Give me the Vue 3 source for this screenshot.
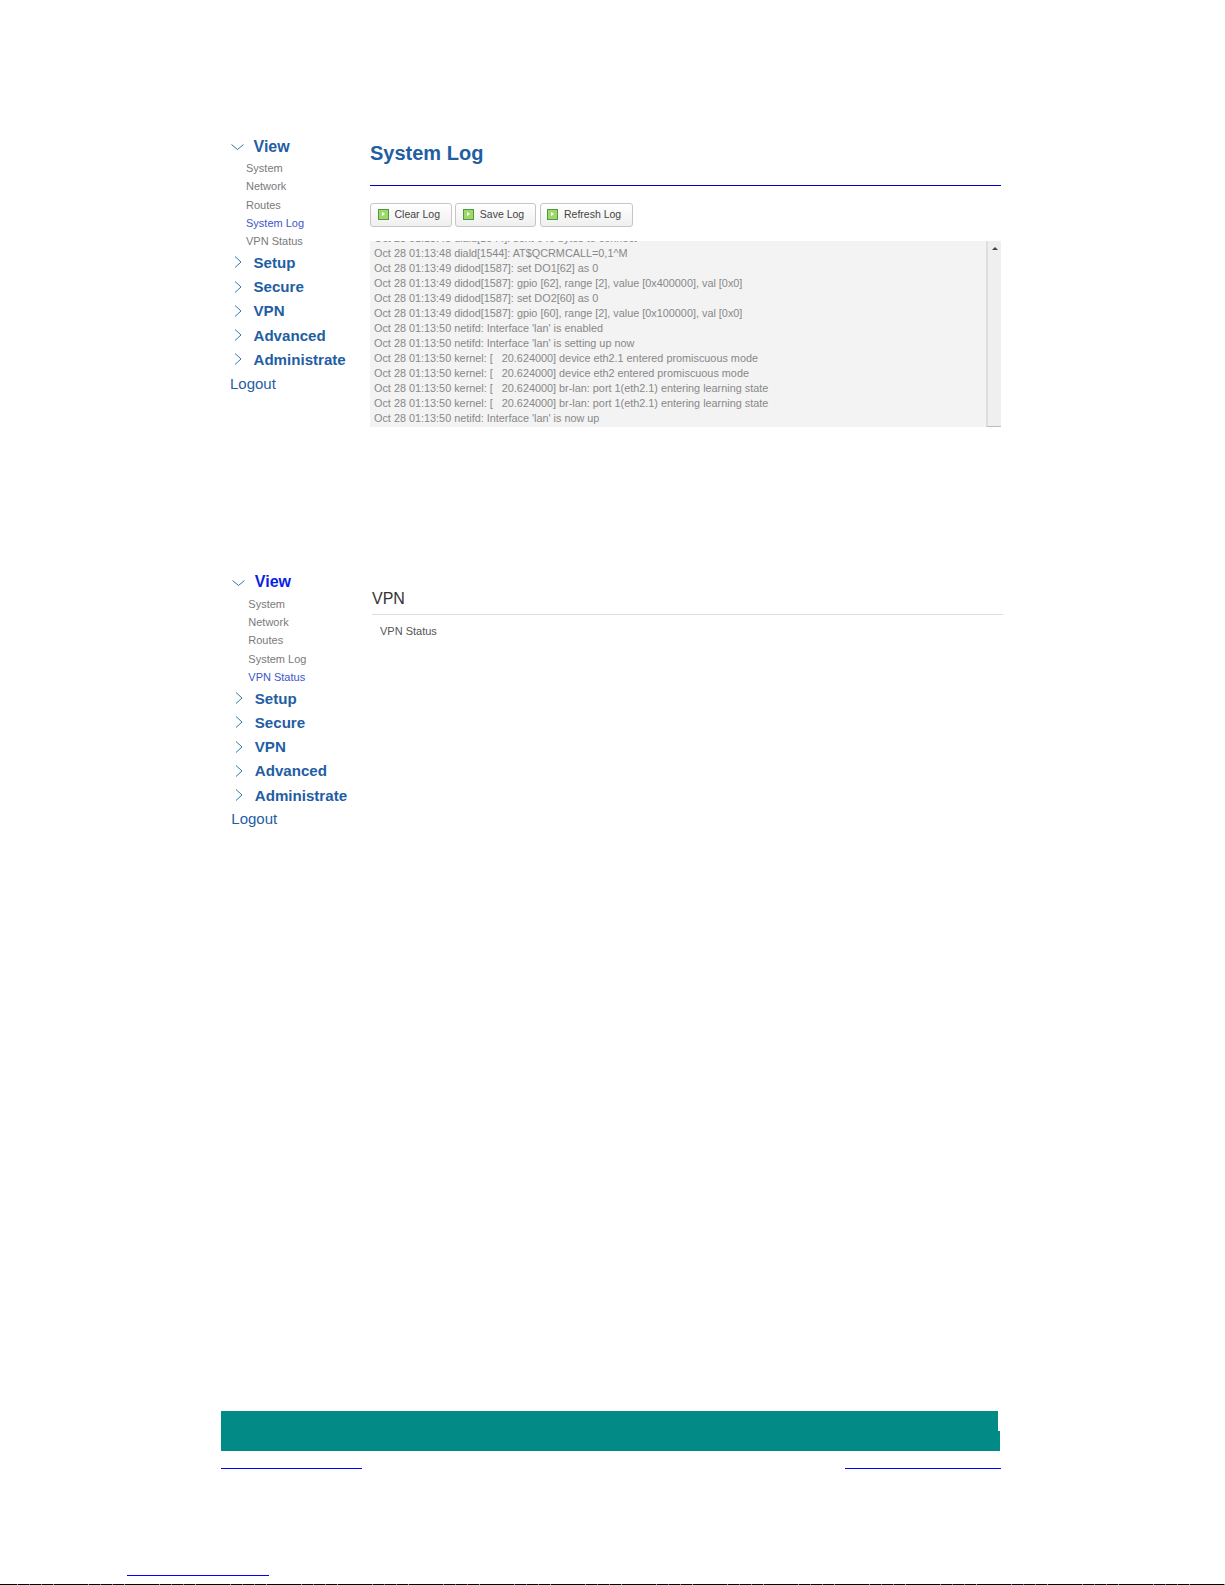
<script setup>
const items = ['System', 'Network', 'Routes', 'System Log', 'VPN Status']
const groups = ['Setup', 'Secure', 'VPN', 'Advanced', 'Administrate']
const buttons = ['Clear Log', 'Save Log', 'Refresh Log']
const logLines = [
  "Oct 28 01:13:48 diald[1544]: sent 646 bytes to connect",
  "Oct 28 01:13:48 diald[1544]: AT$QCRMCALL=0,1^M",
  "Oct 28 01:13:49 didod[1587]: set DO1[62] as 0",
  "Oct 28 01:13:49 didod[1587]: gpio [62], range [2], value [0x400000], val [0x0]",
  "Oct 28 01:13:49 didod[1587]: set DO2[60] as 0",
  "Oct 28 01:13:49 didod[1587]: gpio [60], range [2], value [0x100000], val [0x0]",
  "Oct 28 01:13:50 netifd: Interface 'lan' is enabled",
  "Oct 28 01:13:50 netifd: Interface 'lan' is setting up now",
  "Oct 28 01:13:50 kernel: [   20.624000] device eth2.1 entered promiscuous mode",
  "Oct 28 01:13:50 kernel: [   20.624000] device eth2 entered promiscuous mode",
  "Oct 28 01:13:50 kernel: [   20.624000] br-lan: port 1(eth2.1) entering learning state",
  "Oct 28 01:13:50 kernel: [   20.624000] br-lan: port 1(eth2.1) entering learning state",
  "Oct 28 01:13:50 netifd: Interface 'lan' is now up"
]
const screens = [
  { key: 'log', active: 'System Log', bright: false },
  { key: 'vpn', active: 'VPN Status', bright: true }
]
</script>

<template>
  <div class="page">
    <section v-for="s in screens" :key="s.key" class="screen" :class="'screen-' + s.key">
      <nav class="side">
        <div class="head">
          <svg class="chev" width="16" height="10" viewBox="0 0 16 10"><path d="M1.5 2.5 L7.5 7.5 L13.5 2.5" /></svg>
          <span class="head-label head-view" :class="{ bright: s.bright }">View</span>
        </div>
        <a v-for="i in items" :key="i" class="sub" :class="{ on: i === s.active }">{{ i }}</a>
        <div v-for="g in groups" :key="g" class="head">
          <svg class="chev" width="16" height="14" viewBox="0 0 16 14"><path d="M5 1.5 L11 7 L5 12.5" /></svg>
          <span class="head-label">{{ g }}</span>
        </div>
        <a class="logout">Logout</a>
      </nav>

      <main v-if="s.key === 'log'" class="main">
        <h1 class="title">System Log</h1>
        <div class="btns">
          <button v-for="b in buttons" :key="b" class="btn" type="button">
            <span class="ico"><span class="ico-arrow"></span></span>{{ b }}
          </button>
        </div>
        <div class="log">
          <div class="log-text">
            <div v-for="(l, n) in logLines" :key="n" class="log-line">{{ l }}</div>
          </div>
          <div class="scroll"><span class="scroll-up"></span></div>
        </div>
      </main>

      <main v-else class="main">
        <h2 class="vpn-title">VPN</h2>
        <p class="vpn-status">VPN Status</p>
      </main>
    </section>

    <div class="band">
      <div class="band-top"></div>
      <div class="band-bottom"></div>
    </div>
    <div class="links">
      <span class="link link-left"></span>
      <span class="link link-right"></span>
    </div>
    <div class="foot-link"></div>
    <div class="noise"></div>
  </div>
</template>

<style scoped>
.page {
  width: 1225px;
  height: 1585px;
  overflow: hidden;
  background: #fff;
  font-family: "Liberation Sans", Arial, sans-serif;
}
.screen { display: flex; box-sizing: border-box; }
.screen-log { padding: 135px 0 0 230px; height: 431px; }
.screen-vpn { padding: 139.7px 0 0 231.3px; height: 400px; }
.side { width: 140px; flex: none; display: flex; flex-direction: column; }
.screen-vpn .side { width: 140.7px; }
.screen-vpn .sub { padding-left: 17px; }
.head { display: flex; align-items: center; height: 24.27px; flex: none; }
.chev { width: 16px; flex: none; margin-right: 7.5px; overflow: visible; }
.chev path { fill: none; stroke: #2a7aa8; stroke-width: 1; }
.head-label { font-size: 15.1px; font-weight: bold; color: #1f5ea3; white-space: nowrap; }
.head-view { font-size: 16px; padding-bottom: 1px; }
.head-label.bright { color: #0a1fe8; }
.sub {
  display: block;
  height: 18.2px;
  line-height: 18.2px;
  flex: none;
  padding-left: 16px;
  font-size: 11px;
  color: #7a7a7a;
}
.sub.on { color: #3d55c8; }
.logout { font-size: 15px; line-height: 24.27px; color: #1f5ea3; }

.main { width: 631px; flex: none; }
.title {
  margin: 0;
  height: 50px;
  box-sizing: content-box;
  border-bottom: 1px solid #0000c8;
  font-size: 20px;
  line-height: 36px;
  font-weight: bold;
  color: #1f5ea3;
}
.btns { display: flex; gap: 3.3px; margin-top: 17px; }
.btn {
  display: flex;
  align-items: center;
  height: 24px;
  box-sizing: border-box;
  padding: 0 11px 2px 6.5px;
  border: 1px solid #c6c6c6;
  border-radius: 3px;
  background: linear-gradient(#fff, #efefef);
  font-family: inherit;
  font-size: 10.5px;
  color: #444;
}
.ico {
  width: 11px;
  height: 11px;
  margin-right: 6px;
  box-sizing: border-box;
  border: 1px solid #4f9a3c;
  background: #9fd86a;
  display: flex;
  align-items: center;
  justify-content: center;
}
.ico-arrow {
  width: 0;
  height: 0;
  border-left: 3px solid #fff;
  border-top: 2.5px solid transparent;
  border-bottom: 2.5px solid transparent;
}
.log {
  margin-top: 14px;
  height: 186px;
  display: flex;
  overflow: hidden;
  background: #f3f3f3;
}
.log-text {
  flex: 1;
  margin-top: -10.5px;
  padding-left: 4px;
  font-size: 10.85px;
  line-height: 15px;
  color: #888;
  white-space: pre;
}
.log-line { height: 15px; }
.scroll {
  width: 15px;
  flex: none;
  box-sizing: border-box;
  border-left: 2px solid #dedede;
  border-bottom: 1px solid #bbb;
  background: #efefef;
  display: flex;
  justify-content: center;
  padding-top: 6px;
}
.scroll-up {
  width: 0;
  height: 0;
  border-left: 3px solid transparent;
  border-right: 3px solid transparent;
  border-bottom: 3px solid #444;
}

.vpn-title {
  margin: 18.8px 0 0;
  height: 25px;
  border-bottom: 1px solid #ddd;
  font-size: 16px;
  line-height: 20px;
  font-weight: normal;
  color: #333;
}
.vpn-status {
  margin: 9px 0 0 8px;
  font-size: 11px;
  line-height: 15px;
  color: #555;
}

.band { margin: 580px 0 0 221px; width: 779px; height: 40px; }
.band-top { width: 777px; height: 20px; background: #028a87; }
.band-bottom { height: 20px; background: #028a87; }
.links {
  display: flex;
  justify-content: space-between;
  margin: 17px 0 0 221px;
  width: 780px;
}
.link { height: 1px; background: #0000ff; }
.link-left { width: 141px; }
.link-right { width: 156px; }
.foot-link { width: 142px; height: 1px; margin: 106px 0 0 127px; background: #0000ff; }
.noise {
  height: 1px;
  margin-top: 8px;
  background: repeating-linear-gradient(90deg,
    #000 0 17px, #3cb4c8 17px 18px, #000 18px 29px, #7a5ac8 29px 30px,
    #000 30px 41px, #c85a7a 41px 42px, #000 42px 53px, #5ac87a 53px 54px, #000 54px 71px);
}
</style>
